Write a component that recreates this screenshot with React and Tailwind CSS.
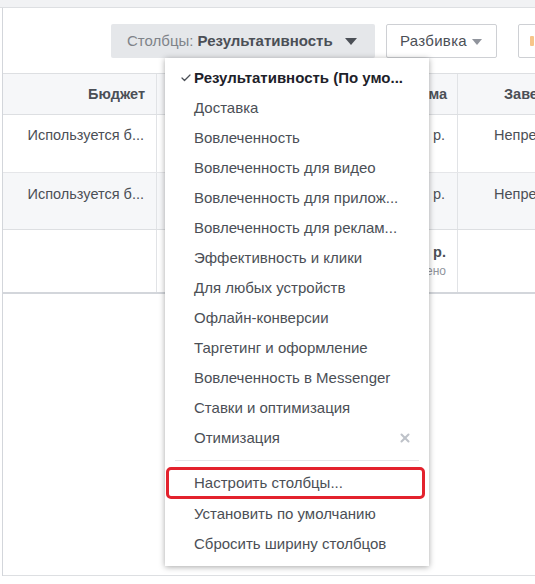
import { Check, X } from 'lucide-react';

const views = [
  'Доставка',
  'Вовлеченность',
  'Вовлеченность для видео',
  'Вовлеченность для прилож...',
  'Вовлеченность для реклам...',
  'Эффективность и клики',
  'Для любых устройств',
  'Офлайн-конверсии',
  'Таргетинг и оформление',
  'Вовлеченность в Messenger',
  'Ставки и оптимизация',
];

function Caret({ small }) {
  return small ? (
    <svg width="10" height="6" viewBox="0 0 10 6" className="ml-[5px] mt-[1px]">
      <path d="M0 0h10L5 6z" fill="#90949c" />
    </svg>
  ) : (
    <svg width="12" height="7" viewBox="0 0 12 7" className="ml-[12px] mt-[1px]">
      <path d="M0 0h12L6 7z" fill="#4b4f56" />
    </svg>
  );
}

function ColumnsMenu() {
  return (
    <div className="absolute left-[165px] top-[58px] w-[264px] bg-white pb-[7px] pt-[5px] text-[15px] shadow-[0_1px_6px_rgba(0,0,0,0.35)]">
      <div className="flex h-[30px] items-center whitespace-nowrap pl-[15px] font-bold text-[#1d2129]">
        <Check size={12} strokeWidth={2.5} className="mr-[2px] text-[#4b4f56]" />
        Результативность (По умо...
      </div>
      {views.map((v) => (
        <div key={v} className="flex h-[30px] items-center whitespace-nowrap pl-[29px]">
          {v}
        </div>
      ))}
      <div className="flex h-[30px] items-center justify-between pl-[29px] pr-[17px]">
        Отимизация
        <X size={14} strokeWidth={3.5} className="text-[#bec2c9]" />
      </div>
      <div className="mx-[10px] mb-[6px] mt-[7px] border-t border-[#e5e6e9]" />
      <div className="ml-[1px] mr-[4px] flex h-[32px] items-center rounded-[5px] border-[3px] border-[#e3222d] pl-[25px]">
        Настроить столбцы...
      </div>
      <div className="flex h-[30px] items-center pl-[29px]">Установить по умолчанию</div>
      <div className="flex h-[30px] items-center pl-[29px]">Сбросить ширину столбцов</div>
    </div>
  );
}

export default function App() {
  return (
    <div className="relative h-[584px] w-[535px] overflow-hidden bg-white font-['Liberation_Sans',Arial,sans-serif] text-[14.5px] leading-[16px] text-[#4b4f56]">
      <div className="h-[8px] border-b border-[#dddfe2] bg-[#f1f2f4]" />
      <div className="ml-[2px] h-[568px] border-l border-[#d3d6db]">
        {/* toolbar */}
        <div className="flex h-[65px] gap-[11px] pl-[108px] pt-[16px] text-[15px]">
          <button className="flex h-[34px] w-[264px] shrink-0 items-center rounded-[2px] bg-[#e5e7ea] pl-[16px]">
            <span className="text-[#7f8389]">Столбцы:&nbsp;</span>
            <span className="font-bold text-[#4b4f56]">Результативность</span>
            <Caret />
          </button>
          <button className="flex h-[34px] w-[111px] shrink-0 items-center rounded-[2px] border border-[#ced0d4] bg-white pl-[13px] tracking-[0.3px] text-[#4b4f56]">
            Разбивка
            <Caret small />
          </button>
          <button className="ml-[10px] flex h-[34px] w-[100px] shrink-0 items-center rounded-[2px] border border-[#ced0d4] bg-white pl-[11px]">
            <span className="h-[10px] w-[4px] rounded-[1px] bg-[#f7c58a]" />
          </button>
        </div>

        {/* table */}
        <div className="border-t border-[#dddfe2]">
          <div className="flex h-[41px] border-b border-[#dddfe2] bg-[#f6f7f9] font-bold text-[#4b4f56]">
            <div className="flex w-[154px] shrink-0 items-center justify-end border-r border-[#e1e3e6] pr-[11px]">Бюджет</div>
            <div className="flex w-[301px] shrink-0 items-center justify-end border-r border-[#e1e3e6] pr-[10px]">Сумма</div>
            <div className="flex items-center whitespace-nowrap pl-[46px]">Завершение</div>
          </div>

          <div className="flex h-[58px] border-b border-[#e5e6e9]">
            <div className="w-[154px] shrink-0 border-r border-[#e1e3e6] pr-[12px] pt-[12px] text-right">Используется б...</div>
            <div className="w-[301px] shrink-0 border-r border-[#e1e3e6] pr-[12px] pt-[12px] text-right">0,00 р.</div>
            <div className="whitespace-nowrap pl-[36px] pt-[12px]">Непрерывно</div>
          </div>

          <div className="flex h-[57px] border-b border-[#dddfe2] bg-[#f6f7f9]">
            <div className="w-[154px] shrink-0 border-r border-[#e1e3e6] pr-[12px] pt-[13px] text-right">Используется б...</div>
            <div className="w-[301px] shrink-0 border-r border-[#e1e3e6] pr-[12px] pt-[13px] text-right">0,00 р.</div>
            <div className="whitespace-nowrap pl-[36px] pt-[13px]">Непрерывно</div>
          </div>

          <div className="flex h-[64px] border-b-2 border-[#d3d6db]">
            <div className="w-[154px] shrink-0 border-r border-[#e1e3e6]" />
            <div className="flex w-[301px] shrink-0 flex-col items-end border-r border-[#e1e3e6] pr-[11px] pt-[14px]">
              <span className="font-bold">0,00 р.</span>
              <span className="mt-[3px] text-[12px] text-[#90949c]">Потрачено</span>
            </div>
            <div />
          </div>
        </div>

        <div className="mt-[281px] border-t border-[#dddfe2]" />
      </div>

      <ColumnsMenu />
    </div>
  );
}
